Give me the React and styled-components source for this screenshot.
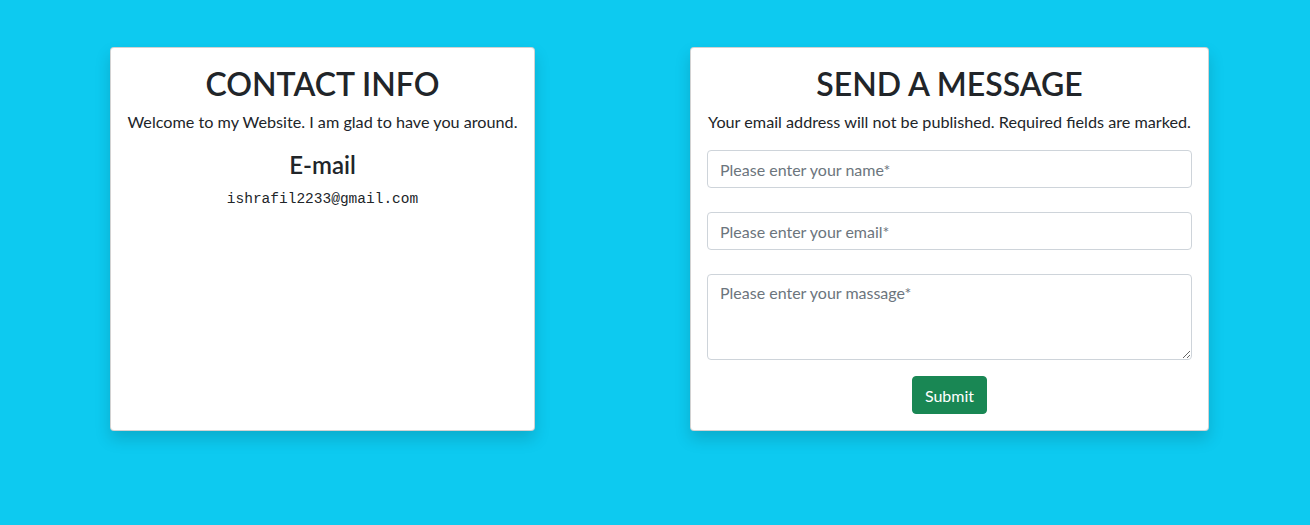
import React from 'react';
import styled, { createGlobalStyle } from 'styled-components';

const GlobalStyle = createGlobalStyle`
    * { box-sizing: border-box; }
    body {
        margin: 0;
        background: #0dcaf0;
        font-family: Lato, "Noto Sans", sans-serif;
        color: #212529;
    }
`;

const Page = styled.div`
    min-height: 525px;
    padding: 47px 0 0 9px;
    display: flex;
    justify-content: center;
    gap: 155px;
    align-items: stretch;
`;

const Card = styled.div`
    width: ${props => props.width}px;
    height: 384px;
    background: #fff;
    border: 1px solid rgba(0, 0, 0, .175);
    border-radius: 4px;
    box-shadow: 0 .5rem 1rem rgba(0, 0, 0, .15);
    padding: 16px 16px 17px;
    display: flex;
    flex-direction: column;
    align-items: center;
    text-align: center;
`;

const Title = styled.h2`
    margin: 0 0 6px;
    font-size: 32px;
    font-weight: 600;
    line-height: 40px;
`;

const Lead = styled.p`
    margin: 0 0 ${props => props.mb || 16}px;
    font-size: 16.2px;
    line-height: 24px;
    white-space: nowrap;
`;

const SubTitle = styled.h4`
    margin: 0 0 11px;
    font-size: 24px;
    font-weight: 600;
    line-height: 1.2;
`;

const Mail = styled.code`
    font-family: "Liberation Mono", monospace;
    font-size: 14.5px;
    color: #212529;
`;

const Form = styled.form`
    width: 100%;
    display: flex;
    flex-direction: column;
    align-items: center;
`;

const Field = styled.input`
    width: 100%;
    height: 38px;
    margin-bottom: 24px;
    padding: 6px 12px;
    font-family: inherit;
    font-size: 16px;
    color: #212529;
    border: 1px solid #ced4da;
    border-radius: 4px;
    outline: none;
    &::placeholder { color: #6c757d; }
`;

const Area = styled.textarea`
    width: 100%;
    height: 86px;
    margin-bottom: 16px;
    padding: 6px 12px;
    font-family: inherit;
    font-size: 16px;
    line-height: 24px;
    color: #212529;
    border: 1px solid #ced4da;
    border-radius: 4px;
    outline: none;
    resize: vertical;
    &::placeholder { color: #6c757d; }
`;

const Button = styled.button`
    height: 38px;
    padding: 0 12px;
    background: #198754;
    color: #fff;
    border: 1px solid #198754;
    border-radius: 4px;
    font-family: inherit;
    font-size: 16px;
    cursor: pointer;
`;

export default function App() {
    return (
        <>
            <GlobalStyle />
            <Page>
                <Card width={425}>
                    <Title>CONTACT INFO</Title>
                    <Lead mb={17}>Welcome to my Website. I am glad to have you around.</Lead>
                    <SubTitle>E-mail</SubTitle>
                    <Mail>ishrafil2233@gmail.com</Mail>
                </Card>
                <Card width={519}>
                    <Title>SEND A MESSAGE</Title>
                    <Lead>Your email address will not be published. Required fields are marked.</Lead>
                    <Form onSubmit={e => e.preventDefault()}>
                        <Field type="text" placeholder="Please enter your name*" />
                        <Field type="email" placeholder="Please enter your email*" />
                        <Area placeholder="Please enter your massage*" />
                        <Button type="submit">Submit</Button>
                    </Form>
                </Card>
            </Page>
        </>
    );
}
